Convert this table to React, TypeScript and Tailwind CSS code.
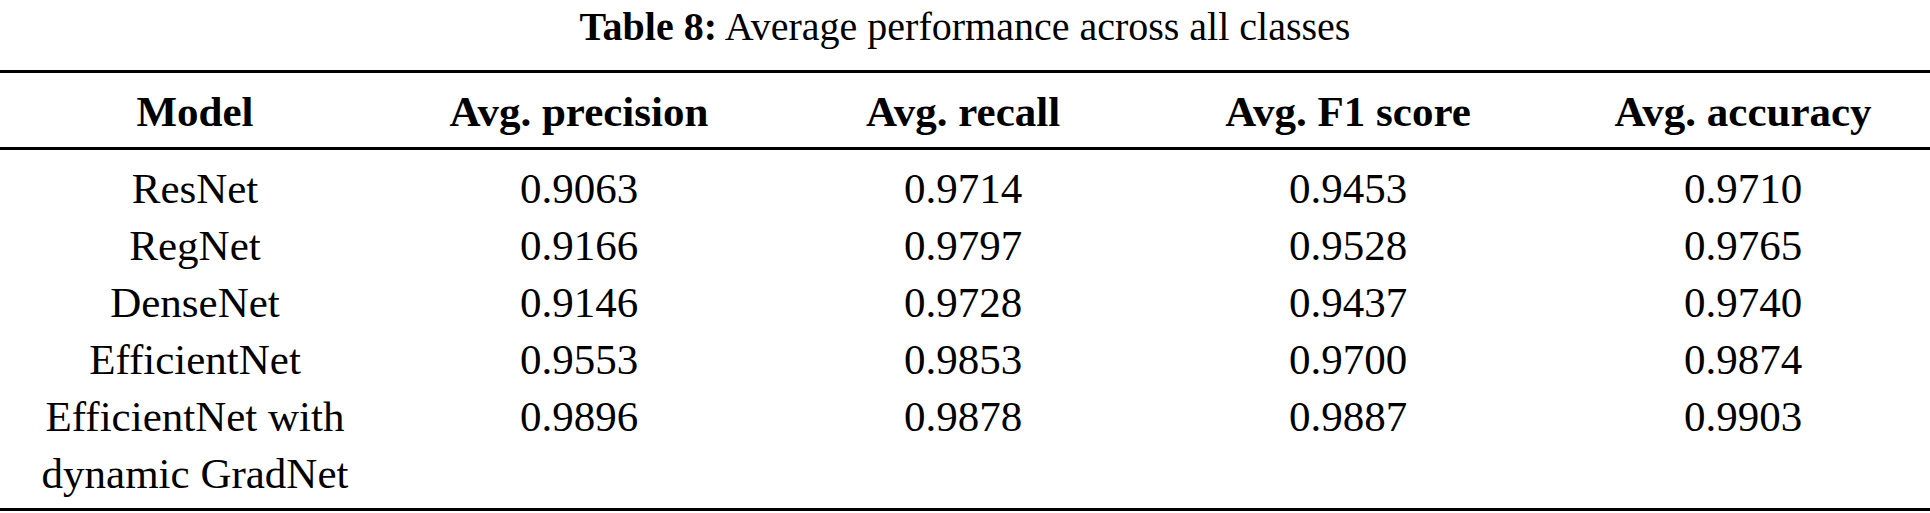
import React from "react";

const rows: [string, string, string, string, string][] = [
  ["ResNet", "0.9063", "0.9714", "0.9453", "0.9710"],
  ["RegNet", "0.9166", "0.9797", "0.9528", "0.9765"],
  ["DenseNet", "0.9146", "0.9728", "0.9437", "0.9740"],
  ["EfficientNet", "0.9553", "0.9853", "0.9700", "0.9874"],
  ["EfficientNet with\ndynamic GradNet", "0.9896", "0.9878", "0.9887", "0.9903"],
];

const cols = "grid grid-cols-[390px_378px_390px_380px_410px]";

export default function App() {
  return (
    <div
      className="w-[1930px] h-[513px] bg-white text-black overflow-hidden"
      style={{ fontFamily: '"Liberation Serif", "Times New Roman", serif' }}
    >
      <div className="h-[54px] leading-[54px] text-center text-[40px]">
        <span className="font-bold">Table 8:</span> Average performance across all classes
      </div>
      <div className="mt-[16px] border-t-[3px] border-black" />
      <div className={`${cols} h-[74px] items-center text-[43px] font-bold text-center pt-[4px]`}>
        <div>Model</div>
        <div>Avg. precision</div>
        <div>Avg. recall</div>
        <div>Avg. F1 score</div>
        <div>Avg. accuracy</div>
      </div>
      <div className="border-t-[3px] border-black" />
      <div className="pt-[10px] pb-[6px] text-[43px] leading-[57px] text-center">
        {rows.map((r, i) => (
          <div key={i} className={cols}>
            <div className="whitespace-pre-line">{r[0]}</div>
            <div>{r[1]}</div>
            <div>{r[2]}</div>
            <div>{r[3]}</div>
            <div>{r[4]}</div>
          </div>
        ))}
      </div>
      <div className="border-t-[3px] border-black" />
    </div>
  );
}
